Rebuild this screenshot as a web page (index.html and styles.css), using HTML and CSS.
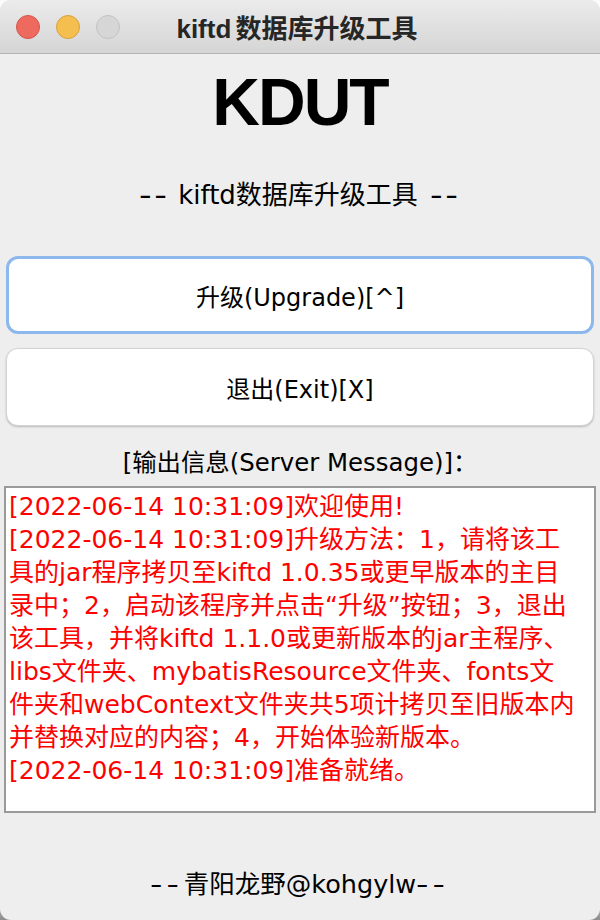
FILE: index.html
```html
<!DOCTYPE html>
<html lang="zh">
<head>
<meta charset="utf-8">
<title>kiftd数据库升级工具</title>
<link rel="stylesheet" href="styles.css">
</head>
<body>
<div class="window">
  <div class="titlebar">
    <div class="lights">
      <span class="light light-red"></span>
      <span class="light light-yellow"></span>
      <span class="light light-gray"></span>
    </div>
    <div class="title">kiftd 数据库升级工具</div>
    <div class="spacer"></div>
  </div>
  <div class="content">
    <h1 class="logo">KDUT</h1>
    <p class="subtitle"><span class="dash dash-lead">--</span> kiftd数据库升级工具 <span class="dash dash-trail">--</span></p>
    <button class="btn btn-focus" type="button">升级(Upgrade)[^]</button>
    <button class="btn btn-exit" type="button">退出(Exit)[X]</button>
    <p class="label">[输出信息(Server Message)]：</p>
    <div class="console">
      <span class="line">[2022-06-14 10:31:09]欢迎使用!</span>
      <span class="line">[2022-06-14 10:31:09]升级方法：1，请将该工</span>
      <span class="line">具的jar程序拷贝至kiftd 1.0.35或更早版本的主目</span>
      <span class="line">录中；2，启动该程序并点击“升级”按钮；3，退出</span>
      <span class="line">该工具，并将kiftd 1.1.0或更新版本的jar主程序、</span>
      <span class="line">libs文件夹、mybatisResource文件夹、fonts文</span>
      <span class="line">件夹和webContext文件夹共5项计拷贝至旧版本内</span>
      <span class="line">并替换对应的内容；4，开始体验新版本。</span>
      <span class="line">[2022-06-14 10:31:09]准备就绪。</span>
    </div>
    <p class="footer"><span class="dash">--</span>青阳龙野@kohgylw<span class="dash">--</span></p>
  </div>
</div>
</body>
</html>
```

FILE: styles.css
```css
html {
  background: linear-gradient(to bottom, #fbfbfb 0, #fbfbfb 860px, #8e8e8e 920px);
}
body {
  margin: 0;
  font-family: "DejaVu Sans", "Noto Sans CJK SC", sans-serif;
}
.window {
  width: 600px;
  height: 920px;
  border-radius: 11px;
  overflow: hidden;
  background: #eeeeee;
  display: flex;
  flex-direction: column;
}
.titlebar {
  height: 53px;
  border-bottom: 1px solid #b4b4b4;
  background: linear-gradient(to bottom, #ebebeb, #d5d5d5);
  display: grid;
  grid-template-columns: 1fr auto 1fr;
  align-items: center;
}
.lights {
  display: flex;
  gap: 16px;
  padding-left: 16px;
  padding-top: 1px;
}
.light {
  width: 22px;
  height: 22px;
  border-radius: 50%;
  border: 1px solid;
}
.light-red { background: #ee6a5f; border-color: #d5544a; }
.light-yellow { background: #f5bf4f; border-color: #d9a13a; }
.light-gray { background: #d6d6d6; border-color: #c2c2c2; }
.title {
  font-family: "Liberation Sans", "Noto Sans CJK SC", sans-serif;
  font-weight: bold;
  font-size: 26px;
  color: #262626;
  word-spacing: -3px;
  margin-right: 6px;
}
.content {
  flex: 1;
  display: flex;
  flex-direction: column;
  padding: 0 6px;
}
.logo {
  margin: 10px 0 0;
  font-family: "Liberation Sans", sans-serif;
  font-weight: bold;
  font-size: 66px;
  line-height: 76px;
  letter-spacing: -2px;
  text-align: center;
  color: #000;
}
.subtitle {
  margin: 40px 0 0;
  font-size: 26px;
  line-height: 30px;
  text-align: center;
  color: #000;
}
.dash {
  display: inline-block;
  letter-spacing: 2px;
  transform: scaleX(1.35);
  transform-origin: left center;
  margin-right: 8px;
}
.dash-trail {
  margin-left: 4px;
}
.btn {
  display: block;
  width: 100%;
  height: 78px;
  margin: 0;
  padding: 0;
  font-family: inherit;
  font-size: 24px;
  color: #000;
  background: #ffffff;
  border-radius: 12px;
  box-sizing: border-box;
}
.btn-focus {
  margin-top: 46px;
  border: 3px solid #8cb8ee;
}
.btn-exit {
  margin-top: 14px;
  border: 1px solid #d4d4d4;
  box-shadow: 0 1px 2px rgba(0, 0, 0, 0.22);
}
.label {
  margin: 22px 0 0;
  font-size: 24.4px;
  line-height: 30px;
  text-align: center;
  color: #000;
}
.console {
  margin: 8px -2px 0;
  height: 327px;
  box-sizing: border-box;
  border: 2px solid #9a9a9a;
  background: #ffffff;
  padding: 2px 0 0 3px;
  color: #ff0000;
  font-size: 25px;
  line-height: 33px;
}
.line {
  display: block;
  white-space: nowrap;
}
.footer {
  margin: 56px 0 0;
  font-size: 25.5px;
  line-height: 30px;
  text-align: center;
  color: #000;
}
.footer .dash {
  letter-spacing: 3px;
  margin-right: 9px;
}
```
